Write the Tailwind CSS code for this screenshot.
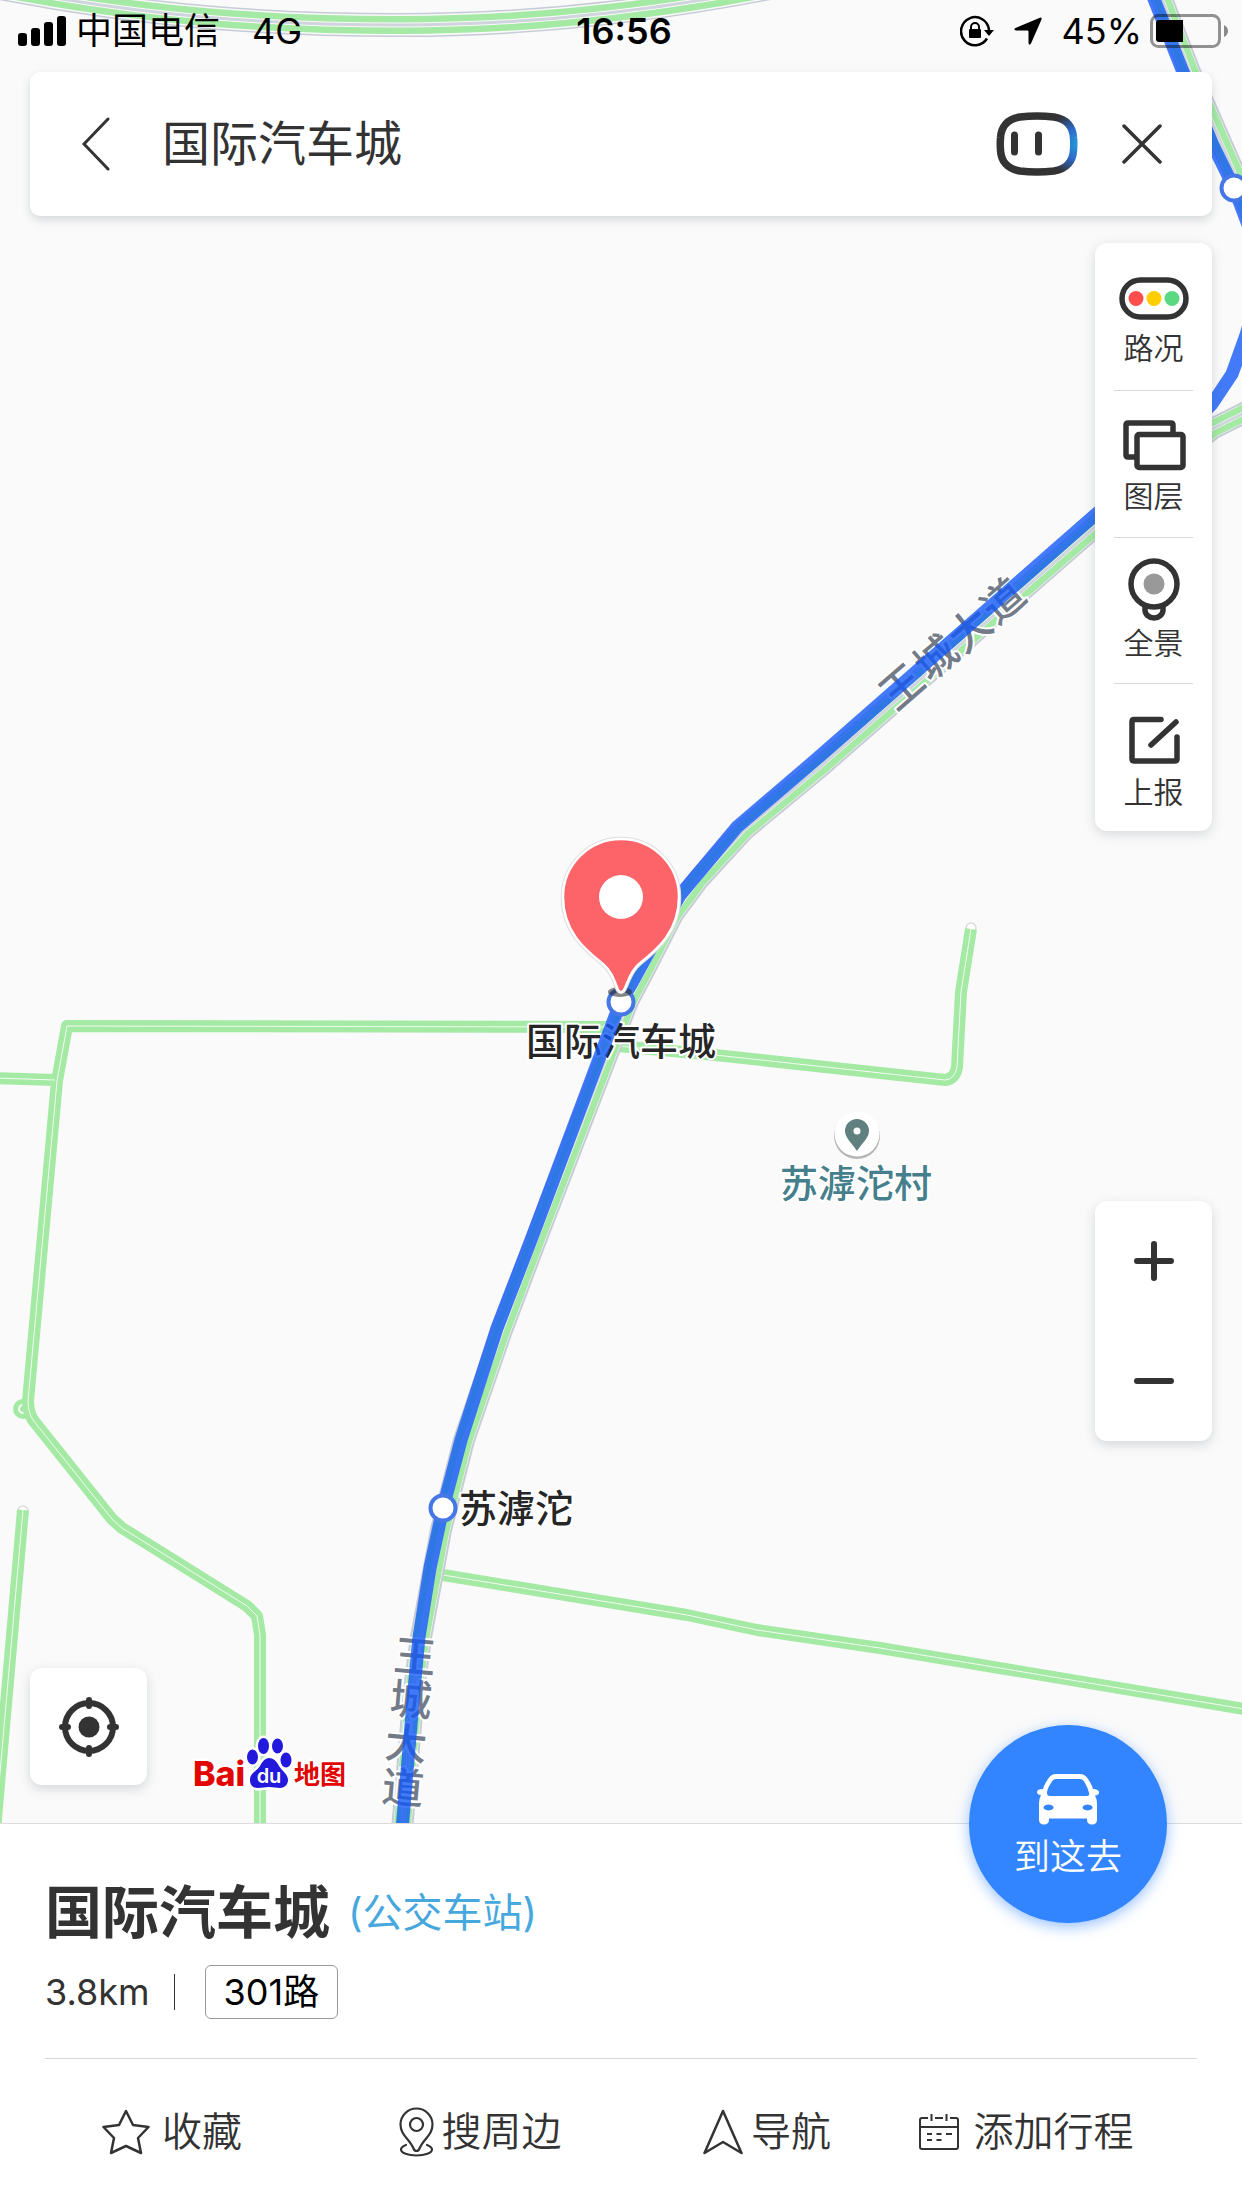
<!DOCTYPE html>
<html lang="zh-CN">
<head>
    <meta charset="UTF-8">
    <meta name="viewport" content="width=device-width, initial-scale=1.0">
    <title>国际汽车城</title>
    <script src="https://cdn.jsdelivr.net/npm/@tailwindcss/browser@4"></script>
</head>
<body class="min-h-screen flex flex-col bg-white text-[#333] font-['Inter','Noto_Sans_CJK_SC',sans-serif]">

    <!-- Map area -->
    <main class="relative grow flex flex-col bg-[#fafafa] border-b border-[#dcdcdc]">

        <svg class="absolute inset-0 w-full h-full" viewBox="0 0 1242 1823" preserveAspectRatio="xMidYMid slice" aria-hidden="true">
            <defs>
                <path id="ring" d="M-10-14C150 18 280 25 400 25C520 25 640 14 780-14"/>
                <path id="branch" d="M1160-6L1190 72L1234 172L1256 225"/>
                <path id="avenue" d="M1260 404L1242 414L1212 429L1160 470L1095 527L820 767L744 830L699 879L673 914L647 965L628 1001L536 1240L502 1330L464 1440L441 1530L421 1637L414 1690L402 1830"/>
                <path id="lane1" d="M-5 1078L55 1080M621 1027L67 1026L57 1081L28 1401Q28 1412 33 1420L112 1519L122 1528L247 1606L257 1616L260 1635V1830"/>
                <path id="lane2" d="M23 1510L-5 1830"/>
                <path id="lane3" d="M618 1046L715 1055L945 1080Q955 1079 957 1067L961 992L971 929"/>
                <path id="lane4" d="M437 1574L687 1615L757 1630L880 1648L1250 1710"/>
            </defs>

            <!-- Local roads -->
            <g fill="none" stroke-linejoin="round">
                <circle cx="23" cy="1409" r="7.500" stroke="#a4e9a4" stroke-width="5"/>
                <circle cx="23" cy="1409" r="3" fill="#a4e9a4"/>
                <g fill="#fff" stroke="#dcdcdc" stroke-width="1.500">
                    <circle cx="23" cy="1511" r="5"/>
                    <circle cx="971" cy="928" r="5"/>
                </g>
                <g stroke="#a4e9a4" stroke-width="12">
                    <use href="#lane1"/><use href="#lane2"/><use href="#lane3"/><use href="#lane4"/>
                </g>
                <g stroke="#f2fcf2" stroke-width="1">
                    <use href="#lane1"/><use href="#lane2"/><use href="#lane3"/><use href="#lane4"/>
                </g>
            </g>

            <!-- Main roads -->
            <g fill="none" stroke-linejoin="round">
                <g stroke="#c6cbd6" stroke-width="22"><use href="#branch"/><use href="#avenue"/><use href="#ring" stroke-width="24"/></g>
                <g stroke="#fafafa" stroke-width="18"><use href="#branch"/><use href="#avenue"/><use href="#ring" stroke-width="21"/></g>
                <g stroke="#a4e9a4" stroke-width="17"><use href="#branch"/><use href="#avenue"/><use href="#ring" stroke-width="18"/></g>
                <g stroke="#fafafa" stroke-width="4"><use href="#branch"/><use href="#avenue"/><use href="#ring" stroke-width="5"/></g>
                <g stroke="#cfd4dd" stroke-width="3"><use href="#branch"/><use href="#avenue"/><use href="#ring"/></g>
            </g>

            <!-- Labels lie under the bus line -->
            <g class="font-medium" text-anchor="middle" stroke="#fff" stroke-width="4" stroke-linejoin="round" paint-order="stroke">
                <g fill="#737b89" font-size="42">
                    <text transform="translate(902 687) rotate(-41)" y="15">王</text>
                    <text transform="translate(936 658) rotate(-41)" y="15">城</text>
                    <text transform="translate(970 630) rotate(-41)" y="15">大</text>
                    <text transform="translate(1003 601) rotate(-41)" y="15">道</text>
                    <text transform="translate(415 1657) rotate(5)" y="15">王</text>
                    <text transform="translate(411 1700) rotate(5)" y="15">城</text>
                    <text transform="translate(406 1744) rotate(5)" y="15">大</text>
                    <text transform="translate(403 1788) rotate(5)" y="15">道</text>
                </g>
                <g font-size="38">
                    <text x="621" y="1055" fill="#262626">国际汽车城</text>
                    <text x="516" y="1522" fill="#262626">苏滹沱</text>
                    <text x="856" y="1197" fill="#457f8c">苏滹沱村</text>
                </g>
            </g>

            <!-- Bus line -->
            <path d="M1152-6L1183 72L1212 143L1234 188L1250 230L1262 280L1246 335L1232 374L1212 404L1150 468L1095 515L820 756L737 827L680 895L650 950L632 983L620 1003L531 1240L497 1328L461 1440L443 1508L430 1568L419 1637L414 1690L402 1830" fill="none" stroke="#1057f7" stroke-opacity=".79" stroke-width="13" stroke-linejoin="round"/>
            <g fill="#fff" stroke="#4577e6" stroke-width="4">
                <circle cx="1234" cy="188" r="12.500"/>
                <circle cx="621" cy="1002" r="12.500"/>
                <circle cx="443" cy="1508" r="12.500"/>
            </g>

            <!-- Village marker -->
            <circle cx="857" cy="1136" r="23" fill="#000" fill-opacity=".28"/>
            <circle cx="857" cy="1134" r="22.500" fill="#fff"/>
            <path d="M857 1119a12 12 0 0 1 12 12c0 7-7 12-12 20c-5-8-12-13-12-20a12 12 0 0 1 12-12z" fill="#5f807f"/>
            <circle cx="857" cy="1131" r="3.500" fill="#fff"/>

            <!-- Selected place -->
            <ellipse cx="620" cy="992" rx="12" ry="5" fill="#222" fill-opacity=".55"/>
            <path d="M563 897a58 58 0 0 1 116 0c0 36-24 54-40 67c-9 8-10 16-15 26q-3 4-6 0c-4-10-6-18-15-26c-16-13-40-31-40-67z" stroke="#dedede" stroke-width="4.500"/>
            <path d="M563 897a58 58 0 0 1 116 0c0 36-24 54-40 67c-9 8-10 16-15 26q-3 4-6 0c-4-10-6-18-15-26c-16-13-40-31-40-67z" fill="#fc6469" stroke="#fff" stroke-width="2.500"/>
            <circle cx="621" cy="897" r="22" fill="#fff"/>

            <!-- Map provider -->
            <g stroke="#fff" stroke-width="5" stroke-linejoin="round" paint-order="stroke">
                <text x="193" y="1786" font-size="34" font-weight="800" fill="#e10602">Bai</text>
                <text x="294" y="1784" font-size="26" font-weight="700" fill="#e10602">地图</text>
                <g fill="#2319dc">
                    <ellipse cx="252.500" cy="1757" rx="5.500" ry="7.500"/>
                    <ellipse cx="263.500" cy="1746" rx="5.500" ry="8"/>
                    <ellipse cx="277.500" cy="1746" rx="5.500" ry="7.500"/>
                    <ellipse cx="286" cy="1760" rx="5.500" ry="7.500"/>
                    <path d="M269 1758c5 0 8 4 10 8c3 5 9 8 9 14c0 5-4 8-8 8c-4 0-7-1-11-1s-7 1-11 1c-5 0-8-3-8-8c0-7 7-9 10-14c2-4 5-8 9-8z"/>
                </g>
            </g>
            <text x="269" y="1783" font-size="20" font-weight="600" text-anchor="middle" fill="#fff">du</text>
        </svg>

        <!-- Status bar -->
        <div class="relative h-[72px] pb-[10px] pl-[18px] pr-[12px] grid grid-cols-[1fr_auto_1fr] items-center text-black text-[36px] leading-[44px]">
            <div class="flex items-center gap-[10px]">
                <svg class="w-[48px] h-[30px]" viewBox="0 0 48 30"><rect y="17" width="9" height="13" rx="3"/><rect x="13" y="12" width="9" height="18" rx="3"/><rect x="26" y="6" width="9" height="24" rx="3"/><rect x="39" width="9" height="30" rx="3"/></svg>
                <span>中国电信</span>
                <span class="ml-[22px]">4G</span>
            </div>
            <span class="font-semibold">16:56</span>
            <div class="flex items-center justify-end">
                <svg class="w-[34px] h-[32px] mr-[20px]" viewBox="0 0 34 32" fill="none" stroke="#000"><path d="M27 23.500A14 14 0 1 1 29 15" stroke-width="2.500"/><path d="M24 15h10l-5 6z" fill="#000" stroke="none"/><rect x="9" y="14" width="12" height="9" rx="1" fill="#000" stroke="none"/><path d="M11 15v-3a4 4 0 0 1 8 0v3" stroke-width="2"/></svg>
                <svg class="w-[28px] h-[28px] mr-[20px]" viewBox="0 0 28 28"><path d="M26.500.500q1.500 0 1 2L17 26.500q-2 2.500-2.500-.500V14.500q0-1-1-1H2q-3-.500-.500-2.500z"/></svg>
                <span class="mr-[8px]">45%</span>
                <svg class="w-[80px] h-[34px]" viewBox="0 0 80 34"><rect x="1.500" y="1.500" width="68" height="31" rx="7" fill="none" stroke="#000" stroke-opacity=".42" stroke-width="3"/><path d="M9 6h24v22H9q-3 0-3-3V9q0-3 3-3z"/><path d="M74 11q4 2 4 6t-4 6z" fill-opacity=".45"/></svg>
            </div>
        </div>

        <!-- Search bar -->
        <header class="relative mx-[30px] h-[144px] px-[34px] flex items-center bg-white rounded-[10px] shadow-[0_4px_10px_rgba(50,70,80,0.18)]">
            <button type="button" aria-label="返回" class="w-16 h-20 flex items-center justify-center">
                <svg class="w-[28px] h-[54px]" viewBox="0 0 28 54" fill="none" stroke="#333" stroke-width="3" stroke-linecap="round"><path d="M26 2L2 27L26 52"/></svg>
            </button>
            <input type="text" aria-label="搜索地点" value="国际汽车城" class="grow min-w-0 ml-[34px] text-[48px] leading-[72px] outline-none">
            <button type="button" aria-label="小度语音" class="w-[82px] h-[64px] mr-[28px]">
                <svg class="w-[82px] h-[64px]" viewBox="0 0 82 64" fill="none" stroke-linecap="round">
                    <defs><radialGradient id="glow" gradientUnits="userSpaceOnUse" cx="82" cy="32" r="32"><stop stop-color="#249bd6"/><stop offset=".5" stop-color="#2f68c8"/><stop offset="1" stop-color="#333"/></radialGradient></defs>
                    <path d="M24 5Q41 3 58 5C71 7 77 15 77.500 26Q78 32 77.500 38C77 49 71 57 58 59Q41 61 24 59C11 57 5 49 4.500 38Q4 32 4.500 26C5 15 11 7 24 5z" stroke="url(#glow)" stroke-width="7.500"/>
                    <path d="M18.500 23v17M42.500 23v17" stroke="#333" stroke-width="7"/>
                </svg>
            </button>
            <button type="button" aria-label="关闭" class="w-[72px] h-[72px] flex items-center justify-center">
                <svg class="w-[40px] h-[40px]" viewBox="0 0 40 40" stroke="#333" stroke-width="3.500" stroke-linecap="round"><path d="M2 2L38 38M38 2L2 38"/></svg>
            </button>
        </header>

        <div class="relative grow flex justify-between px-[30px] pt-[27px] pb-[38px]">

            <button type="button" aria-label="定位" class="self-end w-[117px] h-[117px] flex items-center justify-center bg-white rounded-[12px] shadow-[0_4px_12px_rgba(50,60,80,0.18)]">
                <svg class="w-[60px] h-[60px]" viewBox="0 0 60 60" fill="none" stroke="#333" stroke-width="6" stroke-linecap="round"><circle cx="30" cy="30" r="24"/><circle cx="30" cy="30" r="10.500" fill="#333" stroke="none"/><path d="M30 3v6M30 51v6M3 30h6M51 30h6"/></svg>
            </button>

            <div class="flex flex-col">
                <nav class="w-[117px] h-[588px] px-[19px] flex flex-col bg-white rounded-[12px] shadow-[0_3px_12px_rgba(50,60,80,0.18)] text-[30px] leading-[40px] font-[350] divide-y divide-[#d9d9d9]">
                    <button type="button" class="h-[148px] pt-[25px] flex flex-col items-center">
                        <svg class="w-[70px] h-[60px] shrink-0" viewBox="0 0 70 60"><rect x="3" y="12" width="64" height="37" rx="18.500" fill="none" stroke="#333" stroke-width="5.500"/><circle cx="17" cy="30.500" r="7.500" fill="#ff4e4b"/><circle cx="35" cy="30.500" r="7.500" fill="#ffcd00"/><circle cx="53" cy="30.500" r="7.500" fill="#5bd982"/></svg>
                        路况
                    </button>
                    <button type="button" class="h-[147px] pt-[25px] flex flex-col items-center">
                        <svg class="w-[70px] h-[60px] shrink-0" viewBox="0 0 70 60" fill="none" stroke="#333" stroke-width="5.500" stroke-linejoin="round"><path d="M17 41H9q-2 0-2-2V9q0-2 2-2h43q2 0 2 2v8"/><rect x="18" y="18.500" width="46" height="33" rx="2"/></svg>
                        图层
                    </button>
                    <button type="button" class="h-[146px] pt-[25px] flex flex-col items-center">
                        <svg class="w-[70px] h-[60px] shrink-0 overflow-visible" viewBox="0 0 70 60" fill="none" stroke="#333" stroke-width="5.500"><circle cx="35" cy="21" r="23"/><path d="M26 43v4a9 8 0 0 0 18 0v-4"/><circle cx="35" cy="21" r="10.500" fill="#999" stroke="none"/></svg>
                        全景
                    </button>
                    <button type="button" class="h-[147px] pt-[28px] flex flex-col items-center">
                        <svg class="w-[70px] h-[60px] shrink-0" viewBox="0 0 70 60" fill="none" stroke="#333" stroke-width="5.500" stroke-linecap="round" stroke-linejoin="round"><path d="M42 7.500H15q-2 0-2 2V47q0 2 2 2h41q2 0 2-2V25M57 10L32 33"/></svg>
                        上报
                    </button>
                </nav>

                <div class="w-[117px] h-[240px] mt-[370px] flex flex-col bg-white rounded-[12px] shadow-[0_4px_12px_rgba(50,60,80,0.18)]">
                    <button type="button" aria-label="放大" class="h-[120px] flex items-center justify-center">
                        <svg class="w-[40px] h-[40px]" viewBox="0 0 40 40" stroke="#333" stroke-width="6" stroke-linecap="round"><path d="M20 3v34M3 20h34"/></svg>
                    </button>
                    <button type="button" aria-label="缩小" class="h-[120px] flex items-center justify-center">
                        <svg class="w-[40px] h-[40px]" viewBox="0 0 40 40" stroke="#333" stroke-width="6" stroke-linecap="round"><path d="M3 20h34"/></svg>
                    </button>
                </div>
            </div>
        </div>
    </main>

    <!-- Place sheet -->
    <section class="relative bg-white">
        <button type="button" class="absolute right-[75px] -top-[99px] w-[198px] h-[198px] pt-[4px] rounded-full bg-[#3385ff] text-white text-[36px] leading-[44px] font-[350] flex flex-col items-center justify-center gap-[10px] shadow-[0_4px_14px_rgba(51,133,255,0.5)]">
            <svg class="w-[64px] h-[51px]" viewBox="0 0 64 51" fill="#fff" fill-rule="evenodd"><path d="M20 0h24q5 0 8 5q4 6 5 10q6 0 6 3.500q0 2.500-4 3q2 4 2 8v16q0 5-5 5t-5-5v-1H13v1q0 5-5 5t-5-5V29q0-4 2-8q-4 0-4-3q0-3 6-3q1-4 5-10q3-5 8-5zM20 5q-3 0-5 4q-4 6-4 10q0 3 3 3h37q3 0 2-3q-1-5-4-10q-2-4-5-4zM12.500 30.500a5 3 0 1 0 .100 0zM51.500 30.500a5 3 0 1 0 .100 0z"/></svg>
            到这去
        </button>

        <div class="mx-[45px] pt-[49px] pb-[39px] border-b border-[#d6d6d6]">
            <h1 class="flex items-center gap-[18px]">
                <span class="text-[57px] leading-[80px] font-bold">国际汽车城</span>
                <span class="text-[40px] leading-[80px] text-[#47a8de]">(公交车站)</span>
            </h1>
            <div class="mt-[12px] flex items-center">
                <span class="text-[36px] leading-[44px]">3.8km</span>
                <span class="ml-[24px] w-px h-[36px] bg-[#333]"></span>
                <a href="#" class="ml-[30px] h-[54px] px-[18px] flex items-center border border-[#999] rounded-[6px] text-black text-[36px] leading-[44px]">301路</a>
            </div>
        </div>

        <div class="grid grid-cols-[344fr_272fr_302fr_216fr] pr-[108px] pt-[38px] pb-[41px] text-[40px] leading-[70px] font-[350]">
            <button type="button" class="flex items-center justify-center gap-[12px] whitespace-nowrap">
                <svg class="w-[48px] h-[46px] shrink-0" viewBox="0 0 48 46" fill="none" stroke="#333" stroke-width="2.500" stroke-linejoin="round"><path d="M24 2L31 16L46.500 18L36 29L39 44L24 37L9 44L12 29L1.500 18L17 16z"/></svg>
                收藏
            </button>
            <button type="button" class="flex items-center justify-center gap-[8px] whitespace-nowrap">
                <svg class="w-[35px] h-[50px] shrink-0" viewBox="0 0 35 50" fill="none" stroke="#333" stroke-width="2.200" stroke-linecap="round"><path d="M17.500 1.500a16 16 0 0 1 16 16c0 11-9 14-13 24q-1 2.500-3 2.500t-3-2.500c-4-10-13-13-13-24a16 16 0 0 1 16-16z"/><circle cx="17.500" cy="17.500" r="6.500"/><path d="M7 38q-5 2-5 4.500C2 46 9 48.500 17.500 48.500S33 46 33 42.500Q33 40 28 38"/></svg>
                搜周边
            </button>
            <button type="button" class="flex items-center justify-center gap-[8px] whitespace-nowrap">
                <svg class="w-[40px] h-[46px] shrink-0" viewBox="0 0 40 46" fill="none" stroke="#333" stroke-width="2.500" stroke-linejoin="round"><path d="M20 2L38.500 44L20 33L1.500 44z"/></svg>
                导航
            </button>
            <button type="button" class="flex items-center justify-center gap-[15px] whitespace-nowrap">
                <svg class="w-[40px] h-[36px] shrink-0" viewBox="0 0 40 36" fill="none" stroke="#333" stroke-width="2"><path d="M9 4H3Q1 4 1 6V33Q1 35 3 35H37Q39 35 39 33V6Q39 4 37 4H31M16 4h8M12.500 0v7M27.500 0v7M1 13h38M8 20h5M17.500 20h5M27 20h6M8 26h5M17.500 26h5"/></svg>
                添加行程
            </button>
        </div>
    </section>

</body>
</html>
